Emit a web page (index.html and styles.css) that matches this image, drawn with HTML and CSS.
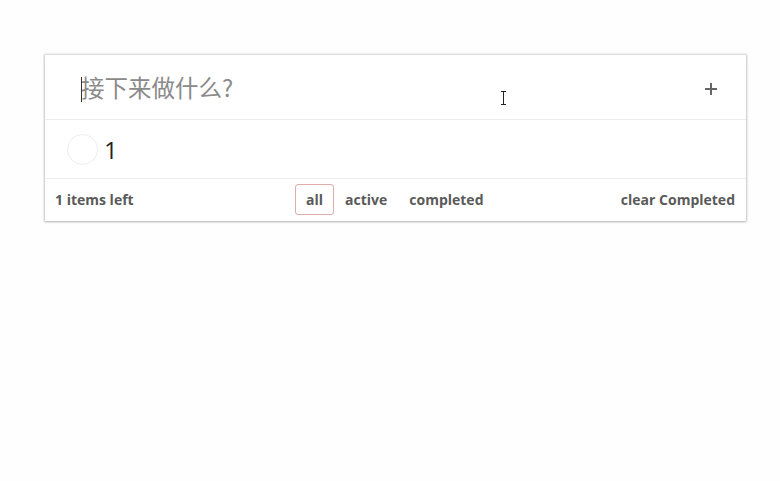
FILE: index.html
```html
<!DOCTYPE html>
<html lang="zh">
<head>
<meta charset="utf-8">
<title>todos</title>
<link rel="stylesheet" href="styles.css">
</head>
<body>
<section class="todoapp">
  <header class="header">
    <span class="caret"></span>
    <input class="new-todo" placeholder="接下来做什么?">
    <svg class="add" width="14" height="14" viewBox="0 0 14 14"><path d="M7 1v12M1 7h12" stroke="#666" stroke-width="2" fill="none"/></svg>
  </header>
  <ul class="todo-list">
    <li class="todo">
      <span class="toggle"></span>
      <span class="label">1</span>
    </li>
  </ul>
  <footer class="footer">
    <span class="count">1 items left</span>
    <div class="filters">
      <a class="filter selected">all</a>
      <a class="filter">active</a>
      <a class="filter">completed</a>
    </div>
    <a class="clear">clear Completed</a>
  </footer>
</section>
<span class="ibeam"></span>
</body>
</html>
```
FILE: styles.css
```css
html, body {
  margin: 0;
  padding: 0;
  background: #fefefe;
}
body {
  padding: 55px 0 0 45px;
  font-family: "Open Sans", "Noto Sans CJK SC", sans-serif;
  position: relative;
  height: 481px;
  box-sizing: border-box;
}
.todoapp {
  width: 701px;
  background: #fff;
  box-shadow: 0 0 2px 1px rgba(0,0,0,0.18), 0 1px 2px rgba(0,0,0,0.15);
}
.header {
  height: 65px;
  display: flex;
  align-items: center;
  padding: 0 28px 0 36px;
  border-bottom: 1px solid #ededed;
  box-sizing: border-box;
  position: relative;
}
.caret {
  position: absolute;
  left: 36px;
  top: 22px;
  width: 1px;
  height: 25px;
  background: #333;
}
.new-todo {
  flex: 1;
  border: none;
  outline: none;
  font-size: 23.5px;
  font-family: "Noto Sans CJK SC", sans-serif;
  padding: 0;
  background: transparent;
  color: #333;
}
.new-todo::placeholder {
  color: #8a8a8a;
}
.add {
  display: block;
  margin-top: 3px;
}
.todo-list {
  list-style: none;
  margin: 0;
  padding: 0;
}
.todo {
  height: 59px;
  display: flex;
  align-items: center;
  padding-left: 22px;
  border-bottom: 1px solid #ededed;
  box-sizing: border-box;
}
.toggle {
  width: 29px;
  height: 29px;
  border: 1px solid #ededed;
  border-radius: 50%;
  margin-right: 6px;
}
.label {
  font-size: 24px;
  color: #222;
  font-family: "Open Sans", sans-serif;
}
.footer {
  height: 42px;
  display: flex;
  align-items: center;
  padding: 0 11px 1px 10px;
  box-sizing: border-box;
  font-size: 14px;
  font-weight: 700;
  color: #5a5a5a;
}
.count {
  width: 240px;
}
.filters {
  display: flex;
  align-items: center;
}
.filter {
  padding: 5px 10px;
  border: 1px solid transparent;
  border-radius: 3px;
  line-height: 19px;
}
.filter.selected {
  border-color: rgba(175, 47, 47, 0.4);
}
.clear {
  margin-left: auto;
}
.ibeam {
  position: absolute;
  left: 503px;
  top: 91px;
  width: 1px;
  height: 14px;
  background: #222;
}
.ibeam::before, .ibeam::after {
  content: "";
  position: absolute;
  left: -2px;
  width: 5px;
  height: 1px;
  background: #222;
}
.ibeam::before { top: 0; }
.ibeam::after { bottom: 0; }
```
